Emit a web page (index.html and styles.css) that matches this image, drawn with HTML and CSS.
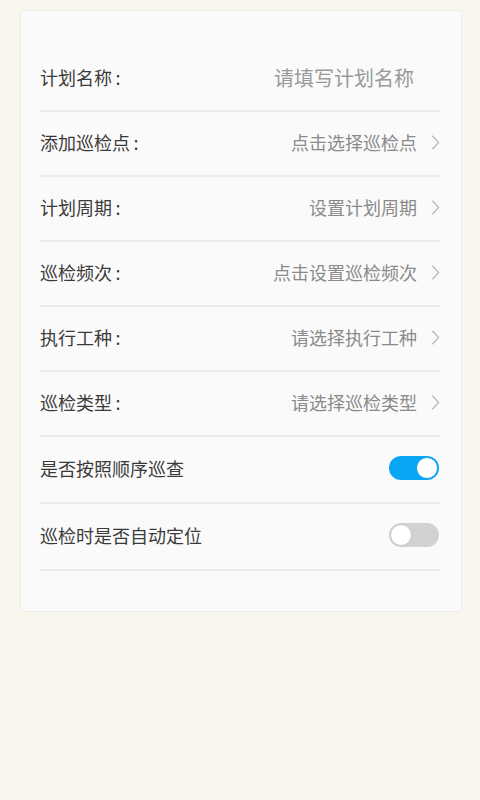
FILE: index.html
```html
<!DOCTYPE html>
<html lang="zh-CN">
<head>
  <meta charset="utf-8">
  <meta name="viewport" content="width=device-width, initial-scale=1.0">
  <title>新增巡检计划</title>
  <link rel="stylesheet" href="styles.css">
</head>
<body>
  <div class="card">
    <div class="row">
      <span class="label">计划名称&#8201;:</span>
      <span class="value value-input">请填写计划名称</span>
    </div>
    <div class="row">
      <span class="label">添加巡检点&#8201;:</span>
      <span class="value">点击选择巡检点</span>
      <svg class="arrow" viewBox="0 0 10 18"><path d="M1.5 1.5 L8.5 9 L1.5 16.5"/></svg>
    </div>
    <div class="row">
      <span class="label">计划周期&#8201;:</span>
      <span class="value">设置计划周期</span>
      <svg class="arrow" viewBox="0 0 10 18"><path d="M1.5 1.5 L8.5 9 L1.5 16.5"/></svg>
    </div>
    <div class="row">
      <span class="label">巡检频次&#8201;:</span>
      <span class="value">点击设置巡检频次</span>
      <svg class="arrow" viewBox="0 0 10 18"><path d="M1.5 1.5 L8.5 9 L1.5 16.5"/></svg>
    </div>
    <div class="row">
      <span class="label">执行工种&#8201;:</span>
      <span class="value">请选择执行工种</span>
      <svg class="arrow" viewBox="0 0 10 18"><path d="M1.5 1.5 L8.5 9 L1.5 16.5"/></svg>
    </div>
    <div class="row">
      <span class="label">巡检类型&#8201;:</span>
      <span class="value">请选择巡检类型</span>
      <svg class="arrow" viewBox="0 0 10 18"><path d="M1.5 1.5 L8.5 9 L1.5 16.5"/></svg>
    </div>
    <div class="row row-switch">
      <span class="label">是否按照顺序巡查</span>
      <span class="switch on"><span class="knob"></span></span>
    </div>
    <div class="row row-switch">
      <span class="label">巡检时是否自动定位</span>
      <span class="switch"><span class="knob"></span></span>
    </div>
  </div>
</body>
</html>
```

FILE: styles.css
```css
body {
  margin: 0;
  background-color: #f9f6ee;
  font-family: "Noto Sans CJK SC", "Noto Sans", sans-serif;
}

.card {
  margin: 10px 18px 0 20px;
  padding: 36px 21px 40px 19px;
  background-color: #fafafa;
  border: 1px solid #ececec;
  border-radius: 4px;
}

.row {
  display: flex;
  align-items: center;
  height: 60px;
  padding-bottom: 3px;
  border-bottom: 2px solid #ebebeb;
}

.row-switch {
  height: 62px;
}

.label {
  flex: 1;
  font-size: 18px;
  color: #3a3a3a;
}

.value {
  font-size: 18px;
  color: #8a8a8a;
}

.value-input {
  font-size: 20px;
  color: #999;
  margin-right: 26px;
}

.arrow {
  width: 9px;
  height: 17px;
  margin-left: 14px;
  fill: none;
  stroke: #b5b5b5;
  stroke-width: 1.3;
}

.switch {
  position: relative;
  width: 50px;
  height: 24px;
  margin-right: 1px;
  border-radius: 12px;
  background-color: #d2d2d2;
}

.switch.on {
  background-color: #09a6f3;
}

.knob {
  position: absolute;
  top: 1px;
  left: 1px;
  width: 20px;
  height: 20px;
  border-radius: 50%;
  background-color: #fff;
  border: 1px solid #c8c8c8;
}

.switch.on .knob {
  left: 27px;
  border-color: #1aa3e8;
}
```
